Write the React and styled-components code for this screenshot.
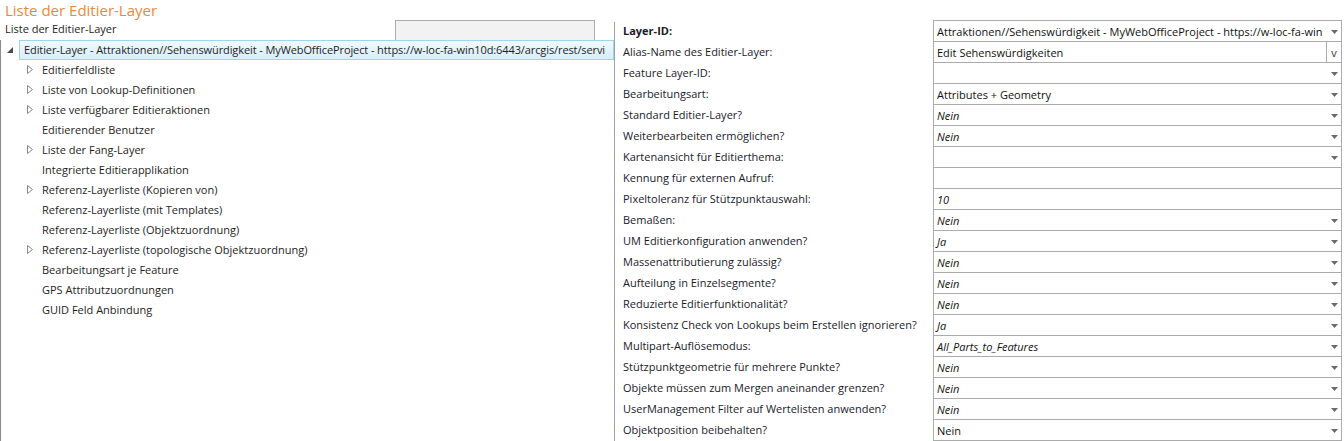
import React from 'react';
import styled, { createGlobalStyle } from 'styled-components';

const GlobalStyle = createGlobalStyle`
  html, body {
    margin: 0;
    padding: 0;
    background: #fff;
  }
  body {
    font-family: "Segoe UI", "Open Sans", "Noto Sans", sans-serif;
    font-size: 11px;
    color: #1e1e1e;
  }
`

const Page = styled.div`
  width: 1344px;
  height: 441px;
  overflow: hidden;
  display: flex;
  flex-direction: column;
`

const Title = styled.div`
  height: 20px;
  line-height: 20px;
  padding-left: 5px;
  font-size: 15px;
  color: #e98a3b;
`

const Body = styled.div`
  flex: 1;
  display: flex;
  min-height: 0;
`

const LeftPane = styled.div`
  width: 614px;
  display: flex;
  flex-direction: column;
`

const LeftHeader = styled.div`
  height: 20px;
  display: flex;
  align-items: center;
  justify-content: space-between;
  padding: 0 19px 0 5px;
`

const HeaderLabel = styled.span`
  line-height: 16px;
  margin-top: -2px;
`

const FilterBox = styled.div`
  width: 198px;
  height: 19px;
  background: #f2f2f2;
  border: 1px solid #ababab;
`

const Tree = styled.div`
  flex: 1;
  border-left: 1px solid #8c8c8c;
  display: flex;
  flex-direction: column;
`

const RootRow = styled.div`
  height: 20px;
  display: flex;
  align-items: center;
`

const RootToggle = styled.span`
  width: 18px;
  display: flex;
  justify-content: center;
`

const RootLabel = styled.div`
  flex: 1;
  height: 20px;
  box-sizing: border-box;
  border: 1px solid #9ad6f2;
  background: linear-gradient(#f1f9fe, #d8eefb);
  padding-left: 4px;
  line-height: 17px;
  letter-spacing: -0.1px;
  white-space: nowrap;
  overflow: hidden;
`

const ChildRow = styled.div`
  height: 20px;
  display: flex;
  align-items: center;
  padding-left: 26px;
  padding-bottom: 1px;
  box-sizing: border-box;
  white-space: nowrap;
`

const Expander = styled.span`
  width: 15px;
  display: flex;
  align-items: center;
`

const Divider = styled.div`
  width: 1px;
  background: #a0a0a0;
  margin-top: 2px;
`

const Grid = styled.div`
  flex: 1;
  display: flex;
  flex-direction: column;
`

const Row = styled.div`
  display: flex;
  height: 21px;
`

const Label = styled.div`
  width: 318px;
  padding-left: 8px;
  box-sizing: border-box;
  line-height: 21px;
  white-space: nowrap;
  font-weight: ${p => (p.$bold ? 700 : 400)};
  color: #1a1a2a;
`

const Value = styled.div`
  width: 409px;
  box-sizing: border-box;
  border: 1px solid #ababab;
  border-bottom: ${p => (p.$last ? '1px solid #ababab' : 'none')};
  height: ${p => (p.$last ? '22px' : '21px')};
  display: flex;
  align-items: center;
`

const ValueText = styled.span`
  flex: 1;
  min-width: 0;
  padding-left: 3px;
  font-style: ${p => (p.$italic ? 'italic' : 'normal')};
  color: #111;
  white-space: nowrap;
  overflow: hidden;
`

const ArrowBox = styled.span`
  width: 14px;
  flex-shrink: 0;
  display: flex;
  justify-content: center;
  align-items: center;
  padding-top: 1px;
`

const VButton = styled.span`
  width: 14px;
  flex-shrink: 0;
  height: 100%;
  border-left: 1px solid #ababab;
  display: flex;
  justify-content: center;
  align-items: center;
  font-size: 11px;
  color: #333;
`

const DownArrow = () => (
  <svg width="7" height="4" viewBox="0 0 7 4">
    <path d="M0 0 H7 L3.5 4 Z" fill="#6a6a6a" />
  </svg>
)

const OpenTriangle = () => (
  <svg width="7" height="9" viewBox="0 0 7 9">
    <path d="M0.5 0.5 L5.5 4.5 L0.5 8.5 Z" fill="none" stroke="#8a8a8a" strokeWidth="1" />
  </svg>
)

const FilledTriangle = () => (
  <svg width="6" height="6" viewBox="0 0 6 6">
    <path d="M6 0 L6 6 L0 6 Z" fill="#4a4a4a" />
  </svg>
)

const children = [
  { text: 'Editierfeldliste', exp: true },
  { text: 'Liste von Lookup-Definitionen', exp: true },
  { text: 'Liste verfügbarer Editieraktionen', exp: true },
  { text: 'Editierender Benutzer' },
  { text: 'Liste der Fang-Layer', exp: true },
  { text: 'Integrierte Editierapplikation' },
  { text: 'Referenz-Layerliste (Kopieren von)', exp: true },
  { text: 'Referenz-Layerliste (mit Templates)' },
  { text: 'Referenz-Layerliste (Objektzuordnung)' },
  { text: 'Referenz-Layerliste (topologische Objektzuordnung)', exp: true },
  { text: 'Bearbeitungsart je Feature' },
  { text: 'GPS Attributzuordnungen' },
  { text: 'GUID Feld Anbindung' },
]

const props = [
  { label: 'Layer-ID:', value: 'Attraktionen//Sehenswürdigkeit - MyWebOfficeProject - https://w-loc-fa-win', bold: true },
  { label: 'Alias-Name des Editier-Layer:', value: 'Edit Sehenswürdigkeiten', button: true },
  { label: 'Feature Layer-ID:', value: '' },
  { label: 'Bearbeitungsart:', value: 'Attributes + Geometry' },
  { label: 'Standard Editier-Layer?', value: 'Nein', italic: true },
  { label: 'Weiterbearbeiten ermöglichen?', value: 'Nein', italic: true },
  { label: 'Kartenansicht für Editierthema:', value: '' },
  { label: 'Kennung für externen Aufruf:', value: '', noArrow: true },
  { label: 'Pixeltoleranz für Stützpunktauswahl:', value: '10', italic: true, noArrow: true },
  { label: 'Bemaßen:', value: 'Nein', italic: true },
  { label: 'UM Editierkonfiguration anwenden?', value: 'Ja', italic: true },
  { label: 'Massenattributierung zulässig?', value: 'Nein', italic: true },
  { label: 'Aufteilung in Einzelsegmente?', value: 'Nein', italic: true },
  { label: 'Reduzierte Editierfunktionalität?', value: 'Nein', italic: true },
  { label: 'Konsistenz Check von Lookups beim Erstellen ignorieren?', value: 'Ja', italic: true },
  { label: 'Multipart-Auflösemodus:', value: 'All_Parts_to_Features', italic: true },
  { label: 'Stützpunktgeometrie für mehrere Punkte?', value: 'Nein', italic: true },
  { label: 'Objekte müssen zum Mergen aneinander grenzen?', value: 'Nein', italic: true },
  { label: 'UserManagement Filter auf Wertelisten anwenden?', value: 'Nein', italic: true },
  { label: 'Objektposition beibehalten?', value: 'Nein' },
]

export default function App() {
  return (
    <Page>
      <GlobalStyle />
      <Title>Liste der Editier-Layer</Title>
      <Body>
        <LeftPane>
          <LeftHeader>
            <HeaderLabel>Liste der Editier-Layer</HeaderLabel>
            <FilterBox />
          </LeftHeader>
          <Tree>
            <RootRow>
              <RootToggle><FilledTriangle /></RootToggle>
              <RootLabel>
                Editier-Layer - Attraktionen//Sehenswürdigkeit - MyWebOfficeProject - https://w-loc-fa-win10d:6443/arcgis/rest/servi
              </RootLabel>
            </RootRow>
            {children.map((c, i) => (
              <ChildRow key={i}>
                <Expander>{c.exp && <OpenTriangle />}</Expander>
                {c.text}
              </ChildRow>
            ))}
          </Tree>
        </LeftPane>
        <Divider />
        <Grid>
          {props.map((p, i) => (
            <Row key={i}>
              <Label $bold={p.bold}>{p.label}</Label>
              <Value $last={i === props.length - 1}>
                <ValueText $italic={p.italic}>{p.value}</ValueText>
                {p.button ? (
                  <VButton>v</VButton>
                ) : !p.noArrow ? (
                  <ArrowBox><DownArrow /></ArrowBox>
                ) : null}
              </Value>
            </Row>
          ))}
        </Grid>
      </Body>
    </Page>
  )
}
